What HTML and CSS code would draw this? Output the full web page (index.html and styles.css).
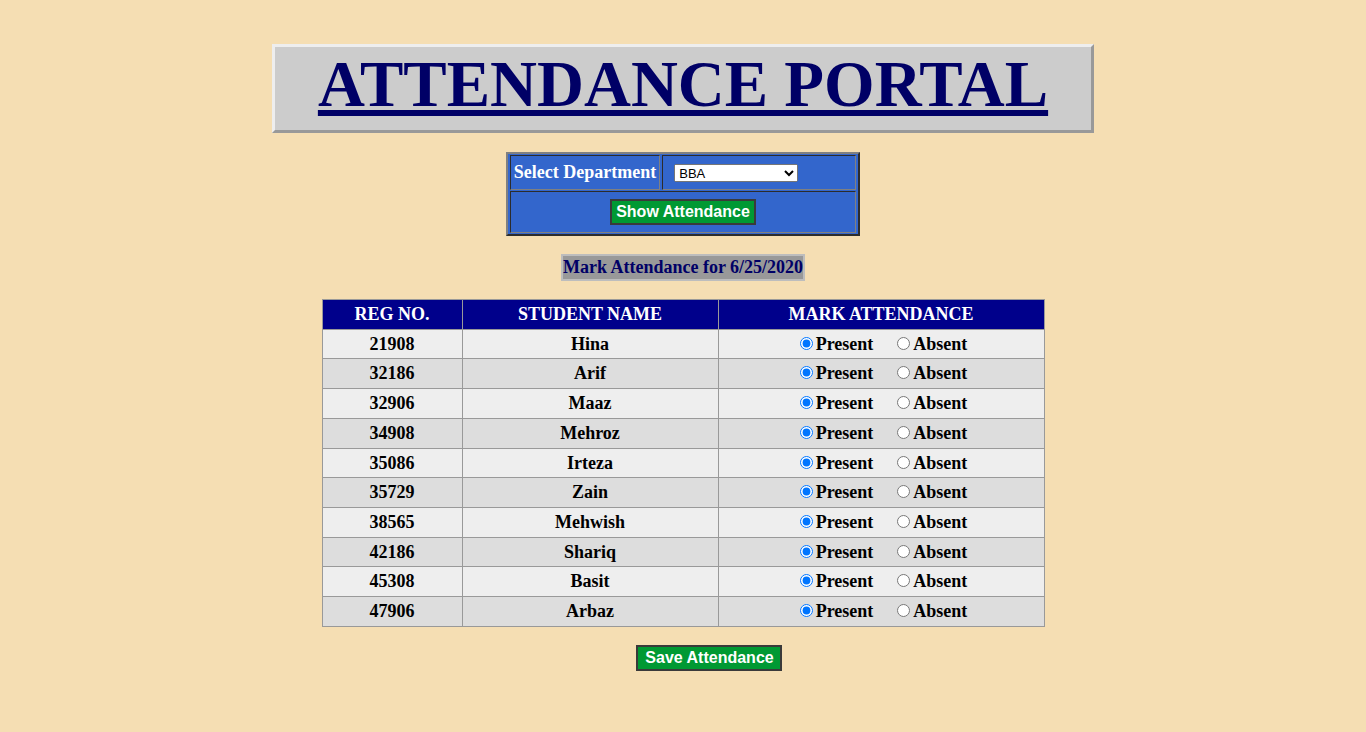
FILE: index.html
```html
<!DOCTYPE html>
<html>
<head>
<meta charset="utf-8">
<title>Attendance Portal</title>
<link rel="stylesheet" href="styles.css">
</head>
<body>
<div class="page">
  <div class="title-box"><h1 class="title">ATTENDANCE PORTAL</h1></div>

  <table class="dept-form">
    <tr>
      <td class="dept-label">Select Department</td>
      <td class="dept-select"><select class="dept-dropdown"><option>BBA</option><option>BSCS</option><option>MBA</option></select></td>
    </tr>
    <tr>
      <td colspan="2" class="dept-action"><button class="btn">Show Attendance</button></td>
    </tr>
  </table>

  <div class="date-label">Mark Attendance for 6/25/2020</div>

  <table class="att">
    <colgroup><col class="c-reg"><col class="c-name"><col class="c-mark"></colgroup>
    <thead>
      <tr><th>REG NO.</th><th>STUDENT NAME</th><th>MARK ATTENDANCE</th></tr>
    </thead>
    <tbody>
      <tr><td>21908</td><td>Hina</td><td><label><input type="radio" name="r1" checked>Present</label><label class="absent"><input type="radio" name="r1">Absent</label></td></tr>
      <tr><td>32186</td><td>Arif</td><td><label><input type="radio" name="r2" checked>Present</label><label class="absent"><input type="radio" name="r2">Absent</label></td></tr>
      <tr><td>32906</td><td>Maaz</td><td><label><input type="radio" name="r3" checked>Present</label><label class="absent"><input type="radio" name="r3">Absent</label></td></tr>
      <tr><td>34908</td><td>Mehroz</td><td><label><input type="radio" name="r4" checked>Present</label><label class="absent"><input type="radio" name="r4">Absent</label></td></tr>
      <tr><td>35086</td><td>Irteza</td><td><label><input type="radio" name="r5" checked>Present</label><label class="absent"><input type="radio" name="r5">Absent</label></td></tr>
      <tr><td>35729</td><td>Zain</td><td><label><input type="radio" name="r6" checked>Present</label><label class="absent"><input type="radio" name="r6">Absent</label></td></tr>
      <tr><td>38565</td><td>Mehwish</td><td><label><input type="radio" name="r7" checked>Present</label><label class="absent"><input type="radio" name="r7">Absent</label></td></tr>
      <tr><td>42186</td><td>Shariq</td><td><label><input type="radio" name="r8" checked>Present</label><label class="absent"><input type="radio" name="r8">Absent</label></td></tr>
      <tr><td>45308</td><td>Basit</td><td><label><input type="radio" name="r9" checked>Present</label><label class="absent"><input type="radio" name="r9">Absent</label></td></tr>
      <tr><td>47906</td><td>Arbaz</td><td><label><input type="radio" name="r10" checked>Present</label><label class="absent"><input type="radio" name="r10">Absent</label></td></tr>
    </tbody>
  </table>

  <button class="btn btn-save">Save Attendance</button>
</div>
</body>
</html>
```

FILE: styles.css
```css
html, body {
  background: #f5deb3;
}
body {
  margin: 0;
  font-family: "Liberation Serif", "Times New Roman", serif;
}
.page {
  display: flex;
  flex-direction: column;
  align-items: center;
  gap: 18px;
  padding-top: 44px;
}
.title-box {
  box-sizing: border-box;
  width: 822px;
  height: 89px;
  background: #cccccc;
  border: 3px solid;
  border-color: #eeeeee #999999 #999999 #eeeeee;
  text-align: center;
  margin-bottom: 1px;
}
.title {
  margin: 0;
  padding-top: 0;
  font-family: "Liberation Serif", "Times New Roman", serif;
  font-size: 65px;
  font-weight: bold;
  line-height: normal;
  color: #000066;
  text-decoration: underline;
  text-decoration-thickness: 6px;
  text-underline-offset: 4px;
}
.dept-form {
  background: #3366cc;
  border: 2px outset #808080;
  border-spacing: 2px 1px;
}
.dept-form td {
  border: 1px inset #808080;
  padding: 6px 3px;
}
.dept-form td.dept-action {
  padding: 7px 3px;
  text-align: center;
}
.dept-label {
  color: #ffffff;
  font-weight: bold;
  font-size: 18px;
  white-space: nowrap;
  padding-left: 4px;
}
.dept-select {
  width: 186px;
}
.dept-dropdown {
  width: 124px;
  height: 18px;
  margin-left: 8px;
  font-family: "Liberation Sans", Arial, sans-serif;
  font-size: 13px;
  vertical-align: middle;
}
.btn {
  font-family: "Liberation Sans", Arial, sans-serif;
  font-weight: bold;
  font-size: 16px;
  line-height: normal;
  color: #ffffff;
  background: #009933;
  border: 2px solid #3a3a3a;
  border-radius: 0;
  padding: 2px 4px;
  margin: 0;
}
.btn-save {
  padding: 2px 6px 2px 7px;
  margin-left: 52px;
}
.date-label {
  background: #999999;
  border: 2px solid #bdbdbd;
  padding: 1px 0;
  color: #000066;
  font-weight: bold;
  font-size: 18px;
  white-space: nowrap;
}
.att {
  width: 722px;
  table-layout: fixed;
  border-collapse: collapse;
  font-size: 18px;
  font-weight: bold;
}
.c-reg { width: 140px; }
.c-name { width: 256px; }
.c-mark { width: 326px; }
.att th, .att td {
  border: 1px solid #999999;
  padding: 4px;
  text-align: center;
  line-height: 20.7px;
}
.att th {
  background: #00008b;
  color: #ffffff;
}
.att tbody tr:nth-child(odd) td {
  background: #eeeeee;
}
.att tbody tr:nth-child(even) td {
  background: #dddddd;
}
.att input[type="radio"] {
  width: 13px;
  height: 13px;
  margin: 3px 3px 0 5px;
}
.att .absent input[type="radio"] {
  margin-left: 24px;
}
```
